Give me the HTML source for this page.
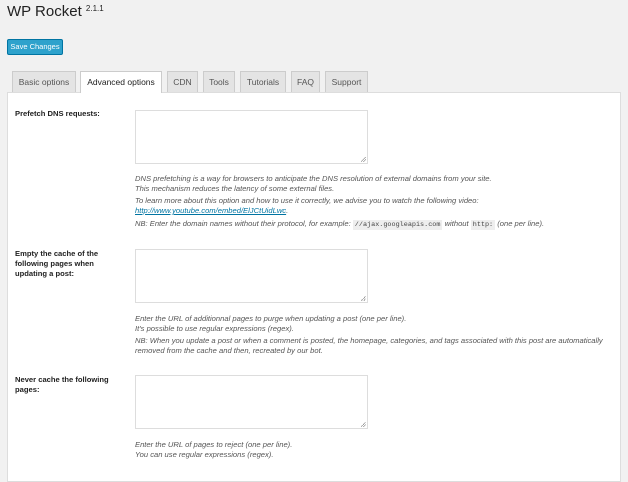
<!DOCTYPE html>
<html><head><style>
*{margin:0;padding:0;box-sizing:border-box}
body{width:628px;height:465px;background:#f1f1f1;font-family:"Liberation Sans",sans-serif;color:#444;position:relative;overflow:hidden}
.a{position:absolute;white-space:nowrap}
h1{position:absolute;left:7px;top:3px;font-size:15px;font-weight:normal;color:#222}
h1 sup{font-size:8px;vertical-align:top;position:relative;top:1px}
.btn{left:7px;top:39px;width:56px;height:16px;background:#2ea2cc;border:1px solid #0074a2;border-radius:2px;color:#fff;font-size:7.5px;line-height:14px;text-align:center}
.tab{top:71px;height:21px;background:#e4e4e4;border:1px solid #ccc;border-bottom:none;font-size:8.5px;line-height:20px;text-align:center;color:#555}
.tab.on{background:#fff;color:#222;height:22px;z-index:2}
.panel{left:7px;top:92px;width:614px;height:390px;background:#fff;border:1px solid #ddd}
.lab{font-size:7.6px;font-weight:bold;color:#222;left:15px;line-height:10px}
.ta{left:135px;width:233px;height:54px;border:1px solid #ddd;background:#fff}
.ta:after{content:"";position:absolute;right:1px;bottom:1px;width:5px;height:5px;background:linear-gradient(135deg,transparent 45%,#999 45%,#999 55%,transparent 55%,transparent 70%,#999 70%,#999 80%,transparent 80%)}
.d{left:135px;font-size:7.6px;font-style:italic;color:#555;line-height:10px}
.d a{color:#0074a2}
code{font-family:"Liberation Mono",monospace;font-style:normal;background:#eee;padding:1px 2px;font-size:6.8px;color:#444}
</style></head><body>
<h1>WP Rocket <sup>2.1.1</sup></h1>
<div class="a btn">Save Changes</div>
<div class="a tab" style="left:12px;width:64px">Basic options</div>
<div class="a tab on" style="left:80px;width:82px">Advanced options</div>
<div class="a tab" style="left:167px;width:31px">CDN</div>
<div class="a tab" style="left:203px;width:32px">Tools</div>
<div class="a tab" style="left:240px;width:46px">Tutorials</div>
<div class="a tab" style="left:291px;width:29px">FAQ</div>
<div class="a tab" style="left:325px;width:43px">Support</div>
<div class="a panel"></div>

<div class="a lab" style="top:109px">Prefetch DNS requests:</div>
<div class="a ta" style="top:110px"></div>
<div class="a d" style="top:174px">DNS prefetching is a way for browsers to anticipate the DNS resolution of external domains from your site.<br>This mechanism reduces the latency of some external files.</div>
<div class="a d" style="top:196px">To learn more about this option and how to use it correctly, we advise you to watch the following video:<br><a><u>http://www.youtube.com/embed/ElJCtUidLwc</u></a>.</div>
<div class="a d" style="top:219px">NB: Enter the domain names without their protocol, for example: <code>//ajax.googleapis.com</code> without <code>http:</code> (one per line).</div>

<div class="a lab" style="top:249px">Empty the cache of the<br>following pages when<br>updating a post:</div>
<div class="a ta" style="top:249px"></div>
<div class="a d" style="top:314px">Enter the URL of additionnal pages to purge when updating a post (one per line).<br>It's possible to use regular expressions (regex).</div>
<div class="a d" style="top:336px">NB: When you update a post or when a comment is posted, the homepage, categories, and tags associated with this post are automatically<br>removed from the cache and then, recreated by our bot.</div>

<div class="a lab" style="top:375px">Never cache the following<br>pages:</div>
<div class="a ta" style="top:375px"></div>
<div class="a d" style="top:440px">Enter the URL of pages to reject (one per line).<br>You can use regular expressions (regex).</div>
</body></html>
